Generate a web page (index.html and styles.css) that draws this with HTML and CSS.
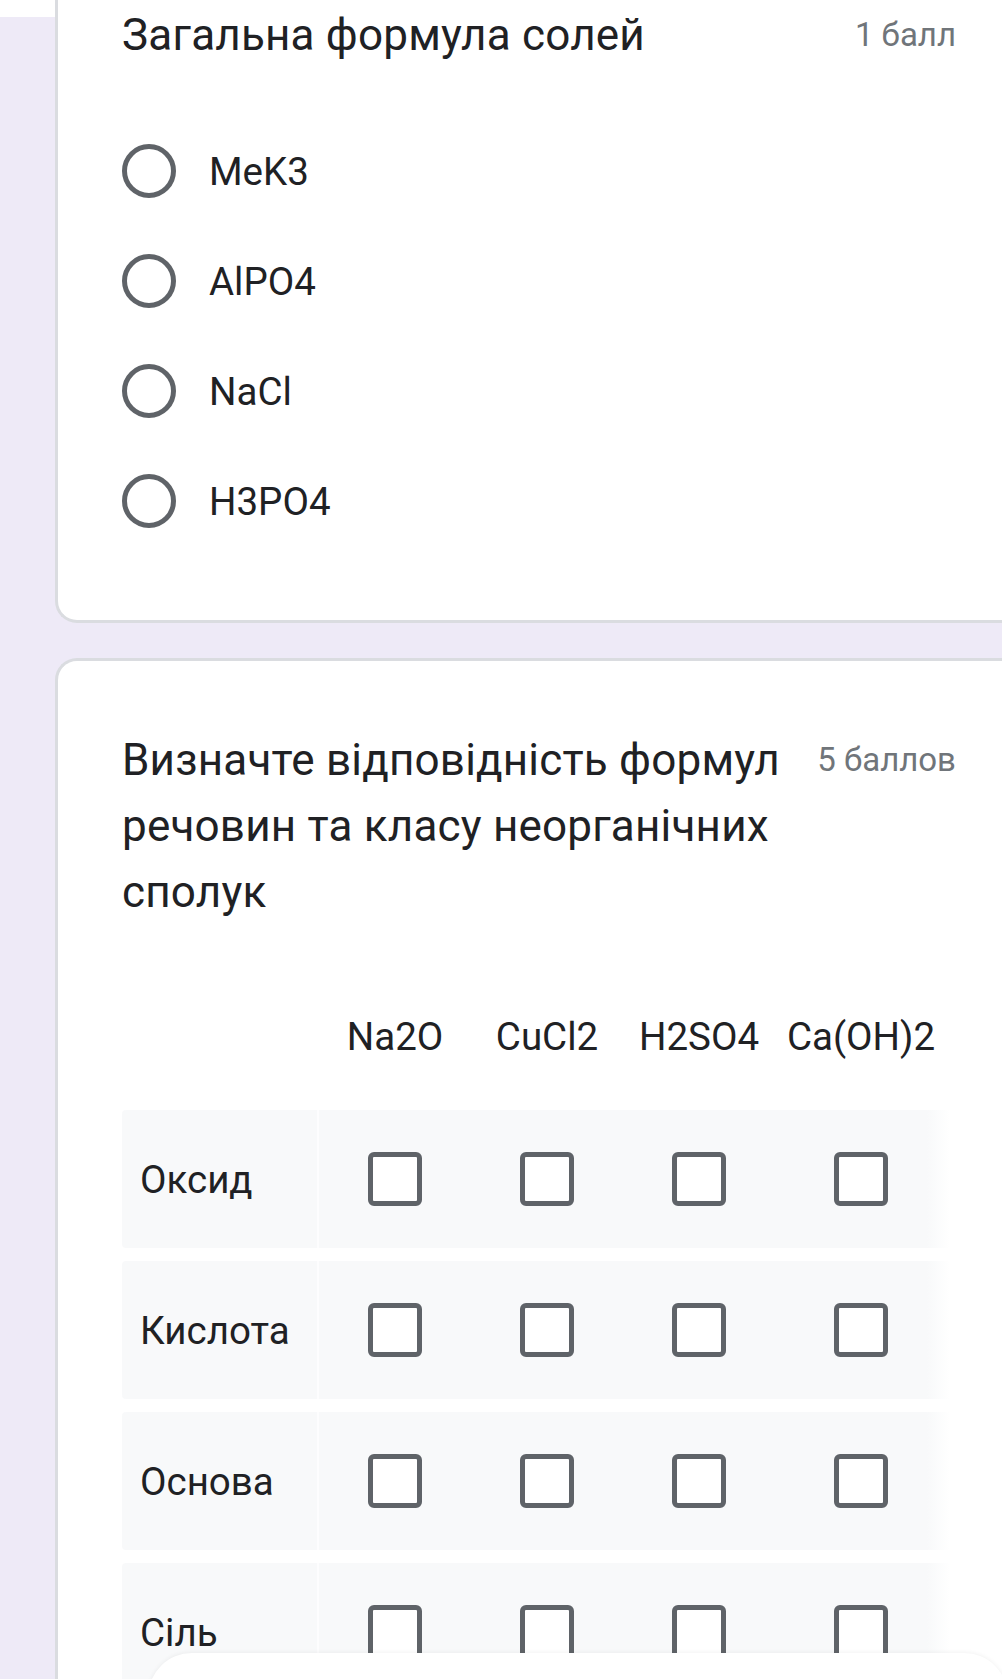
FILE: index.html
```html
<!DOCTYPE html>
<html lang="uk">
<head>
<meta charset="utf-8">
<title>Форма</title>
<link rel="stylesheet" href="styles.css">
</head>
<body>
<div class="page">
  <section class="card card-cut">
    <div class="q-head">
      <div class="q-title">Загальна формула солей</div>
      <div class="q-points">1 балл</div>
    </div>
    <div class="options">
      <label class="option"><span class="radio"></span><span class="opt-text">MeK3</span></label>
      <label class="option"><span class="radio"></span><span class="opt-text">AlPO4</span></label>
      <label class="option"><span class="radio"></span><span class="opt-text">NaCl</span></label>
      <label class="option"><span class="radio"></span><span class="opt-text">H3PO4</span></label>
    </div>
  </section>

  <section class="card">
    <div class="q-head">
      <div class="q-title">Визначте відповідність формул речовин та класу неорганічних сполук</div>
      <div class="q-points">5 баллов</div>
    </div>
    <div class="matrix">
      <div class="m-head">
        <div class="m-corner"></div>
        <div class="m-col">Na2O</div>
        <div class="m-col">CuCl2</div>
        <div class="m-col">H2SO4</div>
        <div class="m-col">Ca(OH)2</div>
      </div>
      <div class="m-row">
        <div class="m-label">Оксид</div>
        <div class="m-cell"><span class="check"></span></div>
        <div class="m-cell"><span class="check"></span></div>
        <div class="m-cell"><span class="check"></span></div>
        <div class="m-cell"><span class="check"></span></div>
      </div>
      <div class="m-row">
        <div class="m-label">Кислота</div>
        <div class="m-cell"><span class="check"></span></div>
        <div class="m-cell"><span class="check"></span></div>
        <div class="m-cell"><span class="check"></span></div>
        <div class="m-cell"><span class="check"></span></div>
      </div>
      <div class="m-row">
        <div class="m-label">Основа</div>
        <div class="m-cell"><span class="check"></span></div>
        <div class="m-cell"><span class="check"></span></div>
        <div class="m-cell"><span class="check"></span></div>
        <div class="m-cell"><span class="check"></span></div>
      </div>
      <div class="m-row">
        <div class="m-label">Сіль</div>
        <div class="m-cell"><span class="check"></span></div>
        <div class="m-cell"><span class="check"></span></div>
        <div class="m-cell"><span class="check"></span></div>
        <div class="m-cell"><span class="check"></span></div>
      </div>
    </div>
  </section>
</div>
<div class="bottom-sheet"></div>
</body>
</html>
```

FILE: styles.css
```css
html, body {
  margin: 0;
  padding: 0;
}
html {
  overflow: hidden;
}
body {
  width: 1002px;
  height: 1679px;
  overflow: hidden;
  position: relative;
  background: linear-gradient(#ffffff 0, #ffffff 17px, #eeeaf7 17px);
  font-family: Roboto, "Noto Sans", sans-serif;
  color: #202124;
}
.page {
  padding-left: 55px;
}
.card {
  width: 970px;
  box-sizing: border-box;
  background: #fff;
  border: 3px solid #dadce0;
  border-right: 0;
  border-radius: 22px 0 0 22px;
  padding: 66px 69px 66px 64px;
  margin-bottom: 35px;
}
.card-cut {
  border-top: 0;
  border-top-left-radius: 0;
  padding-top: 2px;
  padding-bottom: 64px;
}
.q-head {
  display: flex;
  align-items: flex-start;
}
.q-title {
  flex: 1;
  font-size: 44px;
  line-height: 66px;
  color: #202124;
  letter-spacing: 0.2px;
}
.q-points {
  font-size: 33px;
  line-height: 66px;
  color: #70757a;
  margin-left: 36px;
  white-space: nowrap;
}
.options {
  margin-top: 48px;
}
.option {
  display: flex;
  align-items: center;
  height: 110px;
}
.radio {
  width: 44px;
  height: 44px;
  border: 5px solid #5f6368;
  border-radius: 50%;
  flex: none;
}
.opt-text {
  margin-left: 33px;
  font-size: 38.5px;
  color: #202124;
}
.matrix {
  margin-top: 74px;
}
.m-head,
.m-row {
  display: grid;
  grid-template-columns: 197px 152px 152px 152px 172px;
}
.m-head {
  height: 74px;
  align-items: center;
  margin-bottom: 37px;
}
.m-col {
  text-align: center;
  font-size: 38.5px;
  color: #202124;
  white-space: nowrap;
}
.m-row {
  height: 138px;
  margin-bottom: 13px;
  background: linear-gradient(to right, #f8f9fa 0, #f8f9fa 805px, #ffffff 828px);
  border-radius: 4px;
}
.m-label {
  display: flex;
  align-items: center;
  padding-left: 18px;
  font-size: 38.5px;
  color: #202124;
  border-right: 2px solid #fdfdfe;
}
.m-cell {
  display: flex;
  align-items: center;
  justify-content: center;
}
.check {
  width: 44px;
  height: 44px;
  border: 5px solid #5f6368;
  border-radius: 6px;
  background: #fff;
}
.bottom-sheet {
  position: absolute;
  left: 148px;
  top: 1653px;
  width: 860px;
  height: 120px;
  background: #fff;
  border-radius: 44px 44px 0 0;
  box-shadow: 0 -1px 4px rgba(0, 0, 0, 0.05);
}
```
